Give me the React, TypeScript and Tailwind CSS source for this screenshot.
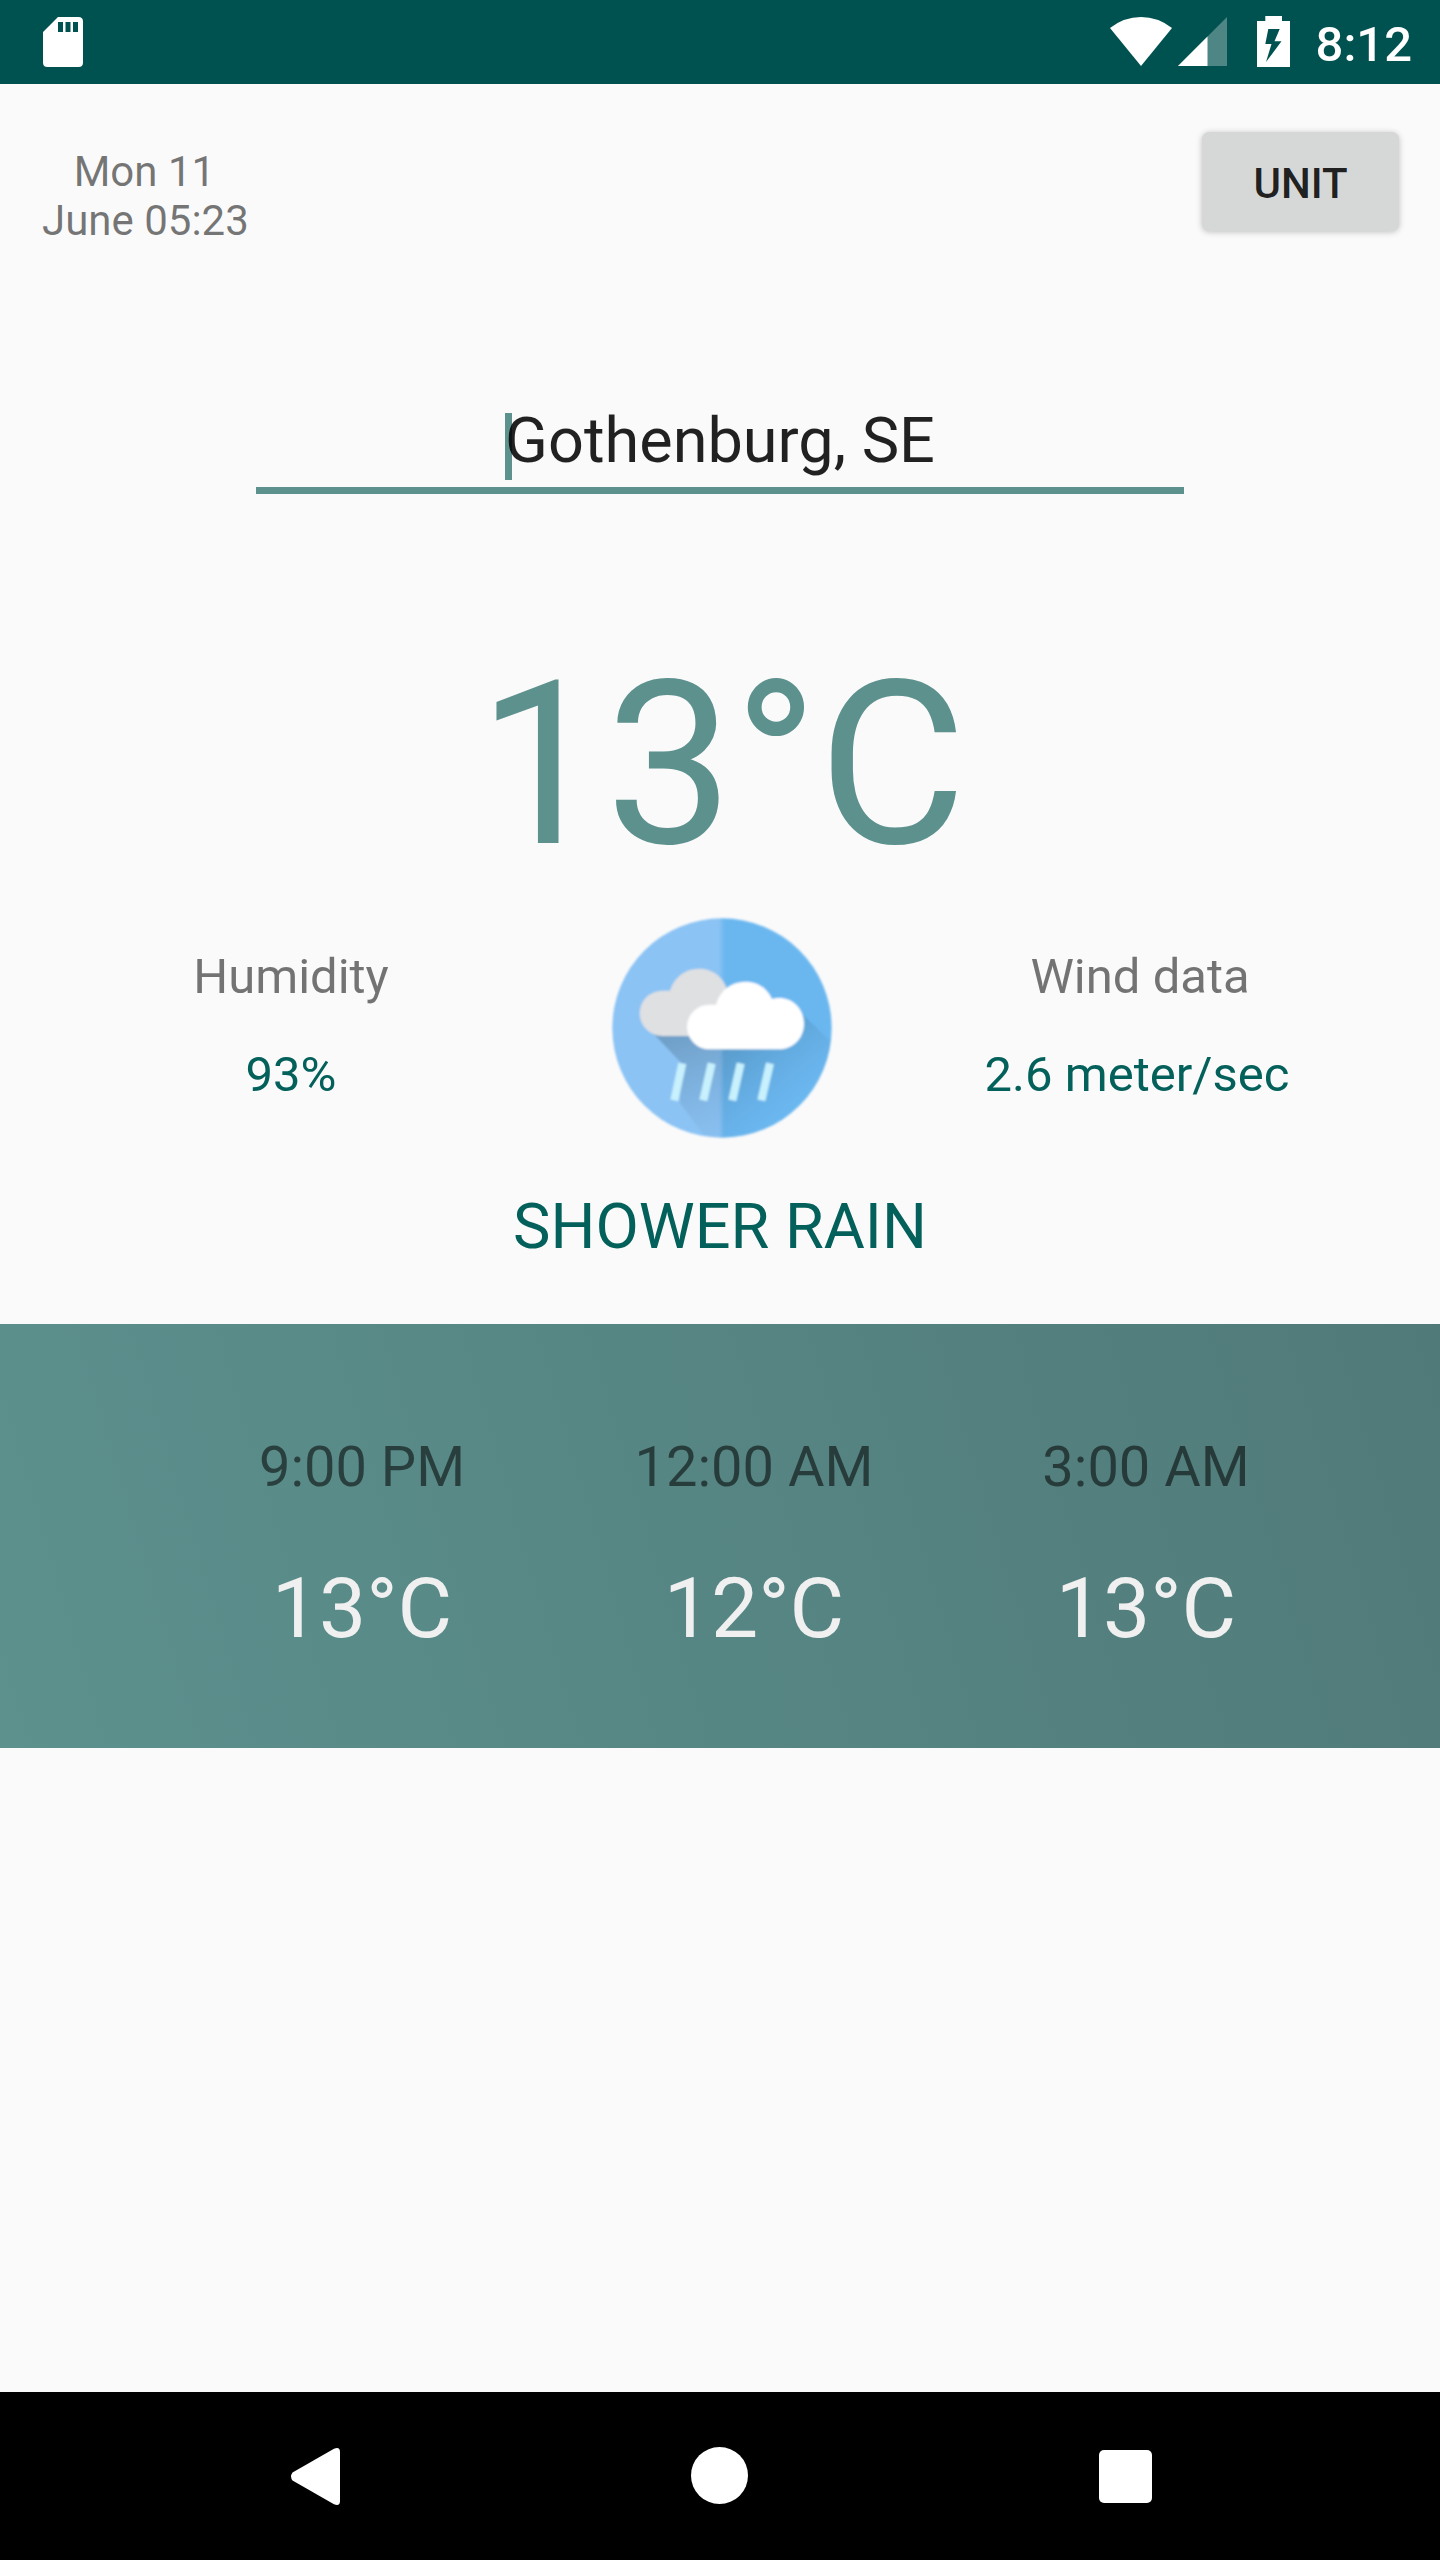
import React from "react";

const forecast = [
  { time: "9:00 PM", temp: "13°C" },
  { time: "12:00 AM", temp: "12°C" },
  { time: "3:00 AM", temp: "13°C" },
];

function StatusBar() {
  return (
    <header className="flex h-[84px] items-start bg-[#005250] text-white">
      <svg className="mt-[17px] ml-[43px] h-[50px] w-[40px]" viewBox="0 0 40 50" fill="#fff">
        <path
          fillRule="evenodd"
          d="M15 0H35.500Q40 0 40 4.500V45.500Q40 50 35.500 50H4.500Q0 50 0 45.500V15ZM15 5V15H20V5ZM22.500 5V15H27.500V5ZM30 5V15H35V5Z"
        />
      </svg>
      <svg className="mt-[17px] ml-auto h-[49px] w-[62px]" viewBox="0 0 62 49" fill="#fff">
        <path d="M0 11Q14 0 31 0T62 11L31 49Z" />
      </svg>
      <svg className="mt-[17px] ml-[6px] h-[49px] w-[49px]" viewBox="0 0 49 49" fill="#fff">
        <path d="M49 0V49H0Z" opacity=".3" />
        <path d="M29.500 19.500V49H0Z" />
      </svg>
      <svg className="mt-[16px] ml-[30px] h-[51px] w-[33px]" viewBox="0 0 33 51" fill="#fff">
        <path
          fillRule="evenodd"
          d="M8.300 0H25V5H33V51H0V5H8.300ZM11.300 13L8.300 28H14.500L9 46L24.500 25.300H17.500L22.700 13Z"
        />
      </svg>
      <span className="mt-[16px] mr-[28px] ml-[26px] text-[49px] leading-[58px] font-medium">8:12</span>
    </header>
  );
}

function RainIcon() {
  return (
    <svg className="h-[260px] w-[260px]" viewBox="0 0 780 780">
      <defs>
        <clipPath id="disc">
          <circle cx="396" cy="384" r="329" />
        </clipPath>
        <linearGradient id="backShade" gradientUnits="userSpaceOnUse" x1="290" y1="390" x2="410" y2="690">
          <stop offset="0" stopColor="#4f7694" stopOpacity=".46" />
          <stop offset="1" stopColor="#5f86b0" stopOpacity=".06" />
        </linearGradient>
        <linearGradient id="frontShade" gradientUnits="userSpaceOnUse" x1="420" y1="430" x2="590" y2="640">
          <stop offset="0" stopColor="#3f7396" stopOpacity=".4" />
          <stop offset=".5" stopColor="#3f7396" stopOpacity=".16" />
          <stop offset="1" stopColor="#4684b0" stopOpacity="0" />
        </linearGradient>
        <linearGradient id="split" gradientUnits="userSpaceOnUse" x1="386" y1="0" x2="404" y2="0">
          <stop offset="0" stopColor="#8bc3f4" />
          <stop offset="1" stopColor="#6bb7f0" />
        </linearGradient>
        <filter id="soft" x="-5%" y="-5%" width="110%" height="110%">
          <feGaussianBlur stdDeviation="2.500" />
        </filter>
      </defs>
      <g filter="url(#soft)">
        <circle cx="396" cy="384" r="329" fill="url(#split)" />
        <g clipPath="url(#disc)">
          <path d="M180 390L270 485V610L350 715H397V390Z" fill="url(#backShade)" />
          <path d="M397 440H580L640 345L740 440V720H397Z" fill="url(#frontShade)" />
        </g>
        <path
          d="M217 408A68 68 0 0 1 217 272H240C252 232 286 206 326 206C366 206 396 228 409 262L380 408Z"
          fill="#dfe0e2"
        />
        <path
          d="M358 448A67 67 0 0 1 358 314H378C390 270 424 245 468 245C504 245 532 266 546 297C598 284 642 320 642 372C642 414 609 448 568 448Z"
          fill="#fff"
        />
        <g stroke="#c8f1fd" strokeWidth="24">
          <path d="M277 490L253 601" />
          <path d="M365 490L340 601" />
          <path d="M452 490L427 601" />
          <path d="M540 490L514 601" />
        </g>
      </g>
    </svg>
  );
}

function Metric({ label, value }: { label: string; value: string }) {
  return (
    <div className="flex flex-col items-center gap-[40px] pt-[50px] text-[49px] leading-[58px] whitespace-nowrap">
      <span className="text-black/54">{label}</span>
      <span className="text-[#04605a]">{value}</span>
    </div>
  );
}

function NavBar() {
  return (
    <nav className="mt-auto flex h-[168px] items-start bg-black">
      <svg className="mt-[56px] ml-[291px] h-[57px] w-[49px]" viewBox="0 0 49 57" fill="#fff">
        <path d="M1.500 24.500L43 .8Q49-1.500 49 4V53Q49 58.500 43 56.200L1.500 32.500Q-1.500 28.500 1.500 24.500Z" />
      </svg>
      <div className="mt-[55px] ml-[351px] size-[57px] rounded-full bg-white" />
      <div className="mt-[58px] ml-[351px] size-[53px] rounded-[5px] bg-white" />
    </nav>
  );
}

export default function App() {
  return (
    <div className="flex h-[2560px] w-[1440px] flex-col overflow-hidden bg-[#fafafa] font-['Roboto',sans-serif]">
      <StatusBar />
      <section className="flex h-[176px] items-start justify-between pt-[48px] pr-[41px] pl-[42px]">
        <p className="mt-[15px] text-center text-[42px] leading-[49px] text-black/54">
          <span className="mr-[2px]">Mon 11</span>
          <br />
          June 05:23
        </p>
        <button className="h-[99px] w-[197px] rounded-[7px] bg-[#d6d7d7] pt-[4px] text-[42px] font-medium text-black/87 shadow-[0_1px_6px_rgba(0,0,0,0.24)]">
          UNIT
        </button>
      </section>

      <section className="mt-[143px] ml-[256px] flex h-[91px] w-[928px] items-start justify-center border-b-[7px] border-[#5c918d]">
        <div className="relative pt-px text-[63px] leading-[74px]">
          <span className="absolute top-[10px] left-0 h-[67px] w-[7px] bg-[#5c918d]" />
          <span className="relative text-black/87">Gothenburg, SE</span>
        </div>
      </section>

      <p className="mt-[138px] h-[267px] pl-[4px] text-center text-[227.5px] leading-[268px] text-[#5c918d]">13°C</p>

      <section className="-mt-px grid h-[290px] grid-cols-[582px_276px_558px]">
        <div className="flex justify-center">
          <Metric label="Humidity" value="93%" />
        </div>
        <div className="flex justify-center pt-[2px]">
          <RainIcon />
        </div>
        <div className="flex justify-center [&_span:first-child]:pl-[6px]">
          <Metric label="Wind data" value="2.6 meter/sec" />
        </div>
      </section>

      <p className="mt-[2px] h-[134px] text-center text-[63px] leading-[74px] text-[#04605a]">SHOWER RAIN</p>

      <section className="grid h-[424px] grid-cols-[392px_392px_392px] bg-[linear-gradient(73.6deg,#5c918e,#507a79)] pt-[110px] pl-[166px] text-center">
        {forecast.map((f) => (
          <div key={f.time}>
            <p className="text-[56px] leading-[66px] text-black/54">{f.time}</p>
            <p className="mt-[60px] text-[84px] leading-[98px] text-[#f0f0f0]">{f.temp}</p>
          </div>
        ))}
      </section>
      <NavBar />
    </div>
  );
}
